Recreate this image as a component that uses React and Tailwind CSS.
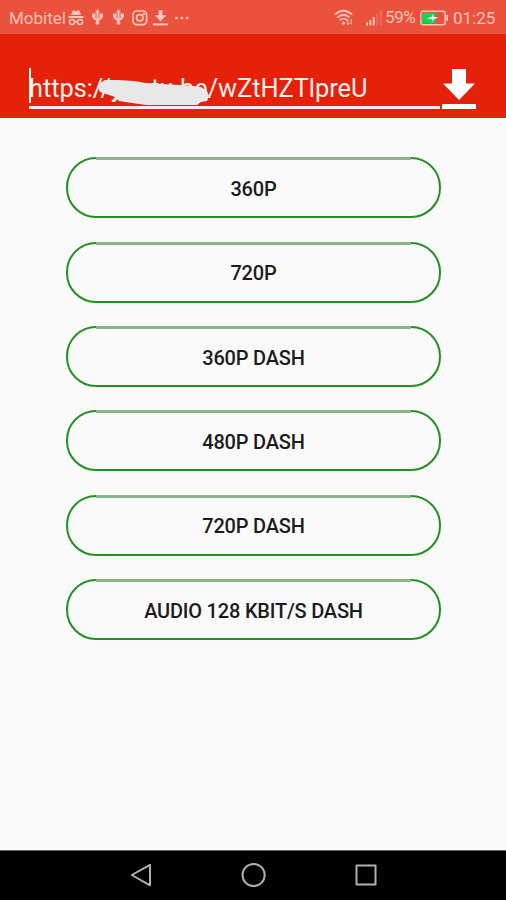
const FORMATS = [
  "360P",
  "720P",
  "360P DASH",
  "480P DASH",
  "720P DASH",
  "AUDIO 128 KBIT/S DASH",
];

export default function App() {
  return (
    <div className="flex h-[900px] w-[506px] flex-col overflow-hidden bg-[#fafafa] font-[Roboto,sans-serif]">
      <StatusBar />
      <UrlBar />

      <main className="flex flex-1 flex-col items-center gap-[23.4px] pt-[39.3px]">
        {FORMATS.map((label) => (
          <button
            key={label}
            className="relative h-[61px] w-[375px] shrink-0 rounded-[30px] border-2 border-[#249024] pt-[2px] pl-px text-[20px] font-medium tracking-[-0.2px] text-[#1c1c1c]"
          >
            {/* softer top edge */}
            <span className="absolute -top-[2px] left-[28px] right-[28px] h-[3px] bg-[#8ab588]" />
            {label}
          </button>
        ))}
      </main>

      <NavBar />
    </div>
  );
}

function StatusBar() {
  return (
    <div className="flex h-[34px] shrink-0 items-center bg-[#eb523d] pl-[9px] pr-[10px] pt-px text-[#ffc3b9]">
      <span className="w-[59px] pt-[2px] text-[17px]">Mobitel</span>
      <IncognitoIcon />
      <UsbIcon className="ml-[8px]" />
      <UsbIcon className="ml-[10px]" />
      <CameraIcon />
      <SaveIcon />
      <svg className="ml-[7px] h-[4px] w-[14px]" viewBox="0 0 14 4" fill="currentColor">
        <rect x="0.3" y="0.8" width="2.4" height="2.4" />
        <rect x="5.6" y="0.8" width="2.4" height="2.4" />
        <rect x="10.9" y="0.8" width="2.4" height="2.4" />
      </svg>

      <div className="ml-auto flex items-center">
        <WifiIcon />
        <SignalIcon />
        <span className="ml-[2px] w-[35px] text-[17px] tracking-[-0.4px]">59%</span>
        <BatteryIcon />
        <span className="ml-[5px] w-[43px] pt-[2px] text-[17px]">01:25</span>
      </div>
    </div>
  );
}

function UrlBar() {
  return (
    <header className="flex h-[84px] shrink-0 items-end bg-[#e62109] pl-[29px] pb-[9px] text-white">
      <div className="relative flex h-[41px] w-[411px] items-start border-b-[3px] border-[#ffe9e6]">
        <span className="absolute left-0 top-0 h-[35px] w-[2px] bg-white" />
        <span className="whitespace-nowrap text-[25.3px] leading-[41px] text-[#fff0ee]">https://youtu.be/wZtHZTlpreU</span>
        {/* marker stroke over the host name */}
        <svg className="absolute left-[67px] top-[7px] h-[32px] w-[116px]" viewBox="96 75 116 32">
          <path
            d="M98 88 L100 83 L105 80 L118 80 L134 81 L146 83 L161 84 L180 85 L193 86 L201 87 L207 91 L209 96 L207 101 L201 102 L197 105 L172 105 L146 105 L132 103 L119 101 L117 99 L112 100 L115 97 L109 95 L100 92 Z"
            fill="#e8e8e8"
          />
        </svg>
      </div>
      <svg className="ml-[2px] h-[41px] w-[34px]" viewBox="0 0 34 41" fill="#fff">
        <path d="M10 1 H24 V15.5 H33 L17 32 L1 15.5 H10 Z" />
        <rect x="0" y="36" width="34" height="5" />
      </svg>
    </header>
  );
}

function NavBar() {
  return (
    <nav className="h-[50px] shrink-0 border-t border-[#6a6a6a] bg-black">
      <svg className="h-[49px] w-[506px]" viewBox="0 851 506 49" fill="none" stroke="#b0b0b0" strokeWidth="2" strokeLinejoin="round">
        <path d="M131.8 875 L150 864.8 V885.3 Z" />
        <circle cx="253.6" cy="875" r="11.1" />
        <rect x="356.5" y="865.5" width="19" height="19" />
      </svg>
    </nav>
  );
}

function IncognitoIcon() {
  return (
    <svg className="h-[16px] w-[16px]" viewBox="0 0 16 16" fill="currentColor">
      <path d="M4.5 0.5 H6.5 L8 1.2 L9.5 0.5 H11.5 L12.8 5 H3.2 Z" />
      <rect x="0.5" y="6" width="15" height="2" />
      <g fill="none" stroke="currentColor" strokeWidth="1.6">
        <circle cx="4" cy="12" r="2.5" />
        <circle cx="12" cy="12" r="2.5" />
        <path d="M6.5 12 Q8 11 9.5 12" />
      </g>
    </svg>
  );
}

function UsbIcon({ className }) {
  return (
    <svg className={`h-[17px] w-[11px] ${className}`} viewBox="0 0 11 17" fill="currentColor">
      <path d="M5.5 0 L8 3.5 H3 Z" />
      <circle cx="5.5" cy="13.8" r="2" />
      <rect x="0" y="4.5" width="3.6" height="3.6" />
      <rect x="7.4" y="4.5" width="3.6" height="3.6" />
      <path d="M5.5 3 V14 M1.8 7 V9 L5.5 11.3 L9.2 9 V7" fill="none" stroke="currentColor" strokeWidth="2.1" />
    </svg>
  );
}

function CameraIcon() {
  return (
    <svg className="ml-[8px] h-[16px] w-[16px]" viewBox="0 0 16 16" fill="none" stroke="currentColor" strokeWidth="1.7">
      <rect x="1" y="1" width="13.6" height="13.6" rx="3.6" />
      <circle cx="7.8" cy="7.8" r="3.2" />
      <circle cx="11.9" cy="3.9" r="0.4" />
    </svg>
  );
}

function SaveIcon() {
  return (
    <svg className="ml-[5px] h-[16px] w-[15px]" viewBox="0 0 15 16" fill="currentColor">
      <path d="M5.6 0 H9.4 V5.3 H13.2 L7.5 11.5 L1.8 5.3 H5.6 Z" />
      <rect x="0" y="13.4" width="15" height="2" />
    </svg>
  );
}

function WifiIcon() {
  return (
    <svg className="h-[17px] w-[20px]" viewBox="0 0 20 17" fill="none" stroke="currentColor" strokeWidth="1.8">
      <path d="M0.8 5.6 Q9.5 -2.2 18.2 5.6" />
      <path d="M3.3 8.6 Q9.5 2.8 15.7 8.6" />
      <path d="M5.8 11.4 Q9.5 7.9 13.2 11.4" />
      <circle cx="9.5" cy="14" r="1.6" fill="currentColor" stroke="none" />
      <path d="M14 10 V15.5 M12.3 14 L14 15.7 L15.7 14 M17.2 15.5 V10" strokeWidth="1" />
    </svg>
  );
}

function SignalIcon() {
  return (
    <svg className="ml-[12px] h-[16px] w-[17px]" viewBox="0 0 17 16" fill="currentColor">
      <rect x="0" y="12.5" width="2" height="3" />
      <rect x="3.4" y="10" width="2" height="5.5" />
      <rect x="6.8" y="7" width="2" height="8.5" />
      <rect x="10.2" y="4" width="2" height="11.5" opacity="0.22" />
      <rect x="13.8" y="1" width="2" height="14.5" opacity="0.22" />
    </svg>
  );
}

function BatteryIcon() {
  return (
    <svg className="h-[16px] w-[28px]" viewBox="0 0 28 16">
      <rect x="0.8" y="1.3" width="24.4" height="13.4" rx="2.5" fill="none" stroke="currentColor" strokeWidth="1.5" />
      <rect x="2" y="2.8" width="13.5" height="10.4" fill="#17d64c" />
      <rect x="26.3" y="5" width="1.7" height="6" fill="currentColor" />
      <path d="M7 8.5 L12 6.5 L12.8 4 L14 7 L18.5 7.5 L13.5 9.3 L12.8 12 L11.5 9 Z" fill="#fff" />
    </svg>
  );
}
